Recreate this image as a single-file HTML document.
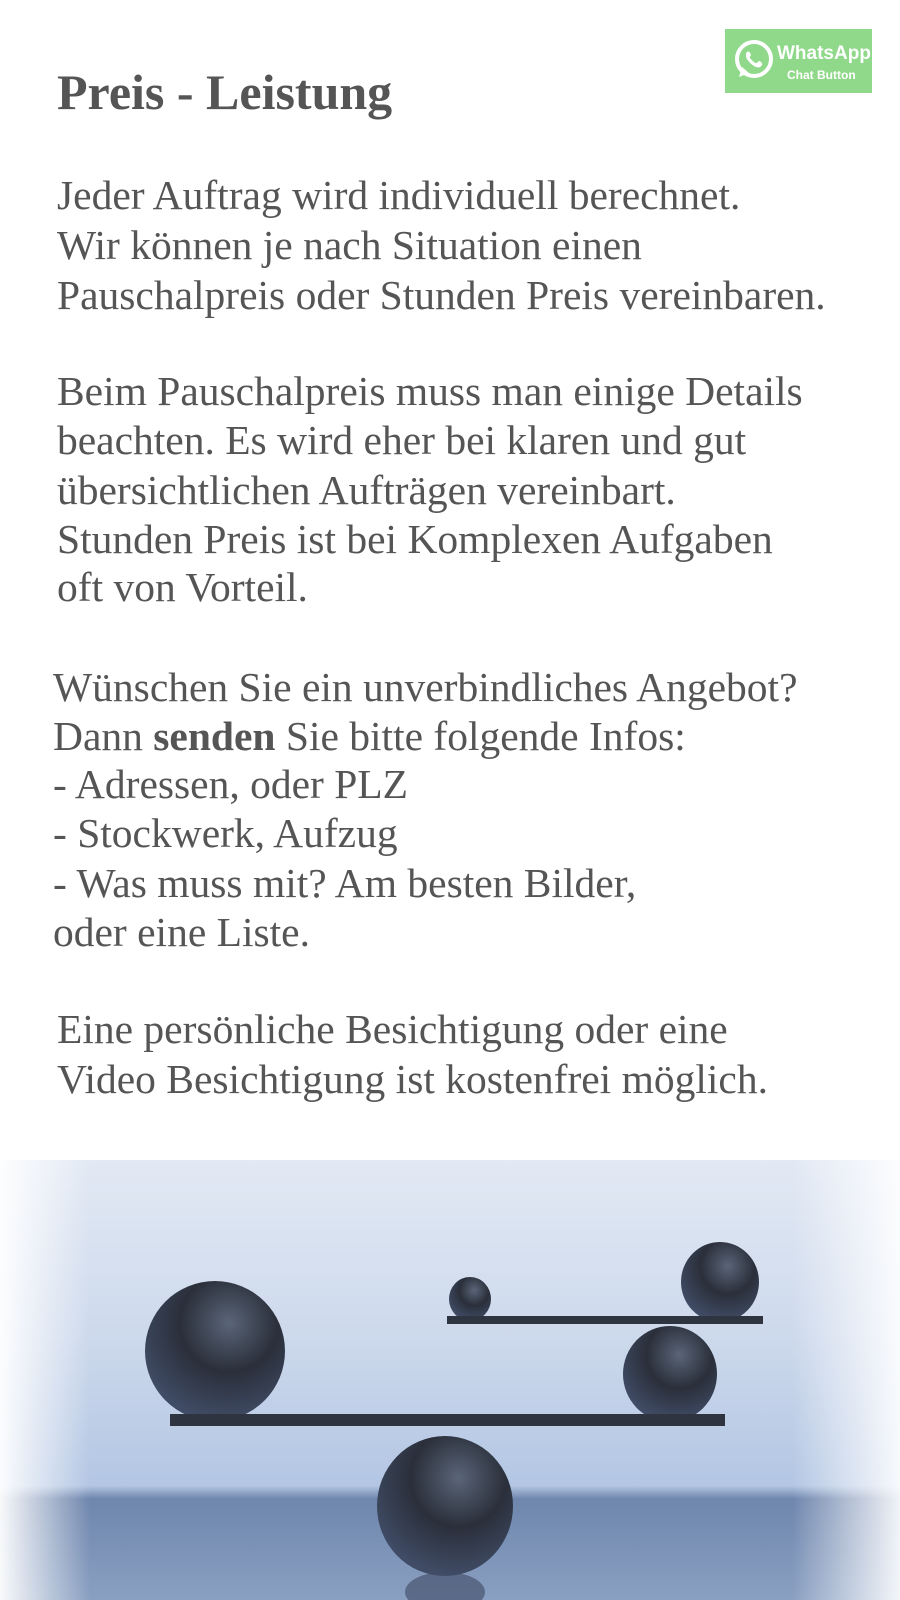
<!DOCTYPE html>
<html><head><meta charset="utf-8"><style>
body{margin:0;width:900px;height:1600px;background:#fff;position:relative;overflow:hidden;font-family:"Liberation Serif",serif;color:#555}
.t{position:absolute;left:57px;white-space:nowrap;font-size:41.5px;line-height:41.5px}
h1{position:absolute;left:57px;top:66px;margin:0;font-size:50px;line-height:52px;font-weight:bold;color:#555}
.wa{position:absolute;left:725px;top:29px;width:147px;height:64px;background:#90d98a;color:#fff;font-family:"Liberation Sans",sans-serif;font-weight:bold}
.img{position:absolute;left:0;top:1160px;width:900px;height:440px;background:linear-gradient(#e2e9f4 0%,#cdd9ec 40%,#b3c6e3 74%,#6f86ad 77%,#8aa0c2 100%)}
.fade{position:absolute;inset:0;background:linear-gradient(90deg,rgba(255,255,255,.95),rgba(255,255,255,0) 10%,rgba(255,255,255,0) 88%,rgba(255,255,255,.9));}
</style></head><body>
<h1>Preis - Leistung</h1>
<div class="wa">
<svg width="46" height="46" viewBox="0 0 46 46" style="position:absolute;left:6px;top:8px"><circle cx="23" cy="22" r="17" fill="none" stroke="#fff" stroke-width="4"/><path d="M8 40 L11 30 L18 36 Z" fill="#fff"/><path d="M16 15c2-2 4 2 4 3s-2 2-1 3 4 5 6 5 2-2 3-2 4 2 3 4-3 3-6 2-10-7-10-11 1-4 1-4z" fill="#fff"/></svg>
<div style="position:absolute;left:52px;top:14px;font-size:19px">WhatsApp</div>
<div style="position:absolute;left:62px;top:39px;font-size:12px">Chat Button</div>
</div>
<div class="t" style="top:175px">Jeder Auftrag wird individuell berechnet.</div>
<div class="t" style="top:225px">Wir können je nach Situation einen</div>
<div class="t" style="top:275px">Pauschalpreis oder Stunden Preis vereinbaren.</div>
<div class="t" style="top:371px">Beim Pauschalpreis muss man einige Details</div>
<div class="t" style="top:420px">beachten. Es wird eher bei klaren und gut</div>
<div class="t" style="top:470px">übersichtlichen Aufträgen vereinbart.</div>
<div class="t" style="top:519px">Stunden Preis ist bei Komplexen Aufgaben</div>
<div class="t" style="top:567px">oft von Vorteil.</div>
<div class="t" style="top:667px;left:53px">Wünschen Sie ein unverbindliches Angebot?</div>
<div class="t" style="top:716px;left:53px">Dann <b>senden</b> Sie bitte folgende Infos:</div>
<div class="t" style="top:764px;left:53px">- Adressen, oder PLZ</div>
<div class="t" style="top:813px;left:53px">- Stockwerk, Aufzug</div>
<div class="t" style="top:863px;left:53px">- Was muss mit? Am besten Bilder,</div>
<div class="t" style="top:912px;left:53px">oder eine Liste.</div>
<div class="t" style="top:1009px">Eine persönliche Besichtigung oder eine</div>
<div class="t" style="top:1059px">Video Besichtigung ist kostenfrei möglich.</div>
<div class="img">
<svg width="900" height="440" viewBox="0 0 900 440" style="position:absolute;left:0;top:0">
<defs><radialGradient id="b" cx="0.6" cy="0.3" r="0.7"><stop offset="0" stop-color="#5a6578"/><stop offset="0.5" stop-color="#2a2f3a"/><stop offset="1" stop-color="#404c66"/></radialGradient></defs>
<ellipse cx="215" cy="191" rx="70" ry="70" fill="url(#b)"/>
<ellipse cx="470" cy="139" rx="21" ry="22" fill="url(#b)"/>
<ellipse cx="720" cy="122" rx="39" ry="40" fill="url(#b)"/>
<ellipse cx="670" cy="214" rx="47" ry="48" fill="url(#b)"/>
<ellipse cx="445" cy="432" rx="40" ry="20" fill="#3c4760" opacity="0.6"/>
<ellipse cx="445" cy="346" rx="68" ry="70" fill="url(#b)"/>
<rect x="447" y="156" width="316" height="8" fill="#2e3440"/>
<rect x="170" y="254" width="555" height="12" fill="#2e3440"/>
</svg>
<div class="fade"></div>
</div>
</body></html>
